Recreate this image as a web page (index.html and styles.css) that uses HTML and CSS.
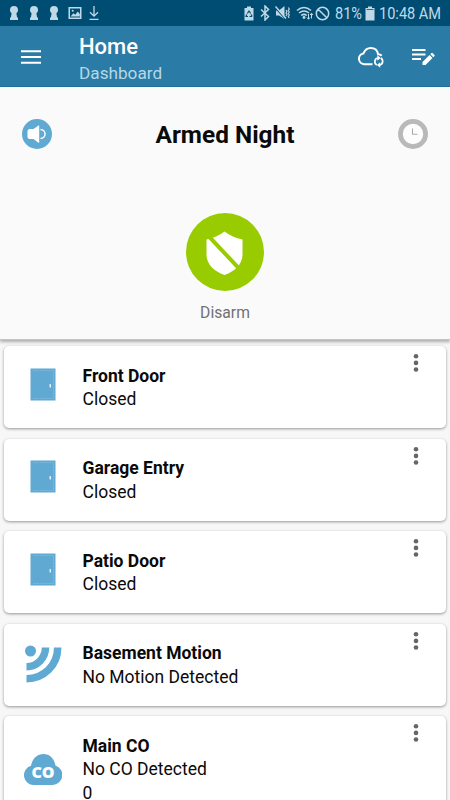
FILE: index.html
```html
<!DOCTYPE html>
<html lang="en">
<head>
  <meta charset="UTF-8" />
  <meta name="viewport" content="width=device-width, initial-scale=1.0"/>
  <title>Home Dashboard</title>
  <link rel="stylesheet" href="styles.css">
</head>
<body>
  <!-- shared icons -->
  <svg class="defs">
    <symbol id="keyhole" viewBox="0 0 10 16"><path d="M5 1a4 4 0 0 1 4 4c0 1.500-.7 2.500-1.600 3.200L8 12l1 1v2H1v-2l1-1 .6-3.800C1.700 7.500 1 6.500 1 5a4 4 0 0 1 4-4z"/></symbol>
    <symbol id="door" viewBox="0 0 26 33">
      <path d="M.5.5h25v32H.5z" fill="#5fa9d3"/>
      <path d="M3.500 2.500h20v28h-20" fill="none" stroke="#8fc6e3" stroke-width=".6" stroke-dasharray="2 1"/>
      <rect x="19.600" y="16" width="1.300" height="3.500" rx=".6" fill="#fff"/>
    </symbol>
    <symbol id="dots" viewBox="0 0 6 20"><circle cx="3" cy="3.200" r="2.300"/><circle cx="3" cy="9.900" r="2.300"/><circle cx="3" cy="16.500" r="2.300"/></symbol>
  </svg>

  <div class="status-bar">
    <div class="notifications">
      <svg width="10" height="16"><use href="#keyhole"/></svg>
      <svg width="10" height="16"><use href="#keyhole"/></svg>
      <svg width="10" height="16"><use href="#keyhole"/></svg>
      <svg class="photo" width="14" height="14" viewBox="0 0 14 14"><path fill-rule="evenodd" d="M.5 1h13v12H.5zM2 2.500v9h10v-9z"/><path d="M2.500 10.500l3-3.300 1.800 1.500 2.500-3.200 2 2.500v2.500z"/><circle cx="4.700" cy="4.800" r="1"/></svg>
      <svg class="download" width="12" height="16" viewBox="0 0 12 16"><path d="M6 1v10M2 7.200l4 4 4-4M1.500 14.300h9" fill="none" stroke="#c0d9e6" stroke-width="1.300"/></svg>
    </div>
    <div class="system">
      <svg class="saver" width="10" height="15" viewBox="0 0 10 15"><path d="M3 .5h4V2h2.500v12.500h-9V2H3z"/><path d="M3.300 7.500L5 5l1.700 2.500M2.700 8.500l-.7 2h2M8 10.500H5.500M7.200 8.500l.8 2" fill="none" stroke="#004d73" stroke-width="1.200"/></svg>
      <svg class="bluetooth" width="10" height="16" viewBox="0 0 10 16"><path d="M1 4.500l7.500 7L5 15V1l3.500 3.500L1 11.500" fill="none" stroke="#c0d9e6" stroke-width="1.500"/></svg>
      <svg class="mute" width="15" height="14" viewBox="0 0 15 14"><path d="M1 4.500h3L9.500 0v13L4 9.500H1z"/><path d="M0 1.500L10.500 13" stroke="#004d73" stroke-width="1.500"/><path d="M.5.500l10.500 12" stroke="#c0d9e6" stroke-width="1.500"/><path d="M11 4l1 1.500L11 7l1 1.500-1 1.500M13.300 1.500l1 1.500-1 1.500 1 1.500-1 1.500 1 1.500-1 1.500 1 1.500" fill="none" stroke="#c0d9e6" stroke-width="1.200"/></svg>
      <svg class="wifi" width="18" height="15" viewBox="0 0 18 15"><path d="M1 4.500Q8 -1.500 15 4.500M3 7Q8 3 13 7M5.200 9.500Q8 7.200 10.800 9.500" fill="none" stroke="#c0d9e6" stroke-width="1.600"/><circle cx="8" cy="11.500" r="1.400"/><path d="M12.500 8v5M11 11.500l1.500 1.800 1.500-1.800M15.500 12.500v-5M14 9l1.500-1.800L17 9" fill="none" stroke="#c0d9e6"/></svg>
      <svg class="blocked" width="15" height="15" viewBox="0 0 15 15"><path d="M3.200 3.200l8.600 8.600M13.700 7.500a6.200 6.200 0 1 1-12.400 0 6.200 6.200 0 0 1 12.400 0z" fill="none" stroke="#c0d9e6" stroke-width="1.500"/></svg>
      <span class="percent">81%</span>
      <svg class="battery" width="10" height="15" viewBox="0 0 10 15"><path d="M3 .5h4V2h2.500v12.500h-9V2H3z"/><path d="M1.500 3.500h7" stroke="#2b6b8c"/></svg>
      <span class="time">10:48 AM</span>
    </div>
  </div>

  <header class="app-bar">
    <svg class="menu" width="20" height="14" viewBox="0 0 20 14"><path d="M0 1.200h20M0 7h20M0 12.800h20" stroke="#fff" stroke-width="2"/></svg>
    <div class="titles">
      <h1>Home</h1>
      <p>Dashboard</p>
    </div>
    <svg class="cloud" width="28" height="22" viewBox="0 0 28 22">
      <path d="M15.500 18.200H7a5.400 5.400 0 0 1-.6-10.700C8 3.500 10.500 2 13.700 2c4 0 6.800 2.500 7.400 6.300 1.300.1 2.700.6 3.600 1.500" fill="none" stroke="#fff" stroke-width="2"/>
      <path d="M19.800 19a3.800 3.800 0 0 1 .9-7M23.700 12a3.800 3.800 0 0 1-.9 7" fill="none" stroke="#fff" stroke-width="1.700"/>
      <path d="M20.300 9.300l3.300 2.700-3.300 2.700zM23.200 16.300l-3.300 2.700 3.300 2.700z" fill="#fff"/>
    </svg>
    <svg class="edit" width="24" height="18" viewBox="0 0 24 18"><path d="M1 2h13.500M1 6.500h13.500M1 11h9" stroke="#fff" stroke-width="2"/><path d="M11.500 14l7-7 3 3-7 7h-3zM19.300 6.200l1.200-1.200q.5-.4 1 0l2 2q.5.500 0 1l-1.200 1.200z" fill="#fff"/></svg>
  </header>

  <section class="panel">
    <div class="panel-head">
      <svg width="30" height="30" viewBox="0 0 30 30"><circle cx="15" cy="15" r="15" fill="#5fa9d3"/><path d="M7 10h4.500l5-3.500h.7v17.300h-.7l-5-3.800H7l-1.500-1.500v-7z" fill="#fff"/><path d="M18.500 10.500c6 0 6 9 0 9" fill="none" stroke="#fff" stroke-width="1.500"/></svg>
      <h2>Armed Night</h2>
      <svg width="30" height="30" viewBox="0 0 30 30"><circle cx="15" cy="15" r="12.600" fill="#fdfdfd" stroke="#b9b9b9" stroke-width="4.800"/><path d="M14.500 9.500v5.800h5" fill="none" stroke="#aaa" stroke-width="1.100"/></svg>
    </div>
    <div class="disarm">
      <svg width="78" height="78" viewBox="0 0 78 78">
        <circle cx="39" cy="39" r="39" fill="#99cc00"/>
        <path d="M38.500 18.500c5.500 4.200 11 6.800 18 8v15c0 10-7.500 16.500-18 20.500-10.500-4-18-10.500-18-20.500v-15c7-1.200 12.500-3.800 18-8z" fill="#fff"/>
        <path d="M20 20.400l36 38.200" stroke="#99cc00" stroke-width="4"/>
      </svg>
      <span>Disarm</span>
    </div>
  </section>

  <main class="devices">
    <div class="card">
      <div class="icon"><svg width="26" height="33"><use href="#door"/></svg></div>
      <div class="info"><h3>Front Door</h3><p>Closed</p></div>
      <svg class="more" width="6" height="20"><use href="#dots"/></svg>
    </div>
    <div class="card">
      <div class="icon"><svg width="26" height="33"><use href="#door"/></svg></div>
      <div class="info"><h3>Garage Entry</h3><p>Closed</p></div>
      <svg class="more" width="6" height="20"><use href="#dots"/></svg>
    </div>
    <div class="card">
      <div class="icon"><svg width="26" height="33"><use href="#door"/></svg></div>
      <div class="info"><h3>Patio Door</h3><p>Closed</p></div>
      <svg class="more" width="6" height="20"><use href="#dots"/></svg>
    </div>
    <div class="card">
      <div class="icon icon-motion">
        <svg width="38" height="38" viewBox="0 0 38 38"><circle cx="6.500" cy="6" r="5.500" fill="#5fa9d3"/><path d="M21.500 2.500c0 10.500-8.500 19.200-19 19.200M33.700 2.500c0 17.500-13.700 31.200-31.200 31.200" fill="none" stroke="#5fa9d3" stroke-width="7.500"/></svg>
      </div>
      <div class="info"><h3>Basement Motion</h3><p>No Motion Detected</p></div>
      <svg class="more" width="6" height="20"><use href="#dots"/></svg>
    </div>
    <div class="card card-co">
      <div class="icon">
        <svg width="38" height="31" viewBox="0 0 38 31"><path d="M10 31a9.800 9.800 0 0 1-3-19.200C8.500 4.500 13 0 19.500 0S30 4.500 31.500 11.500A10 10 0 0 1 28.500 31z" fill="#5fa9d3"/><text class="co" x="19" y="24">CO</text></svg>
      </div>
      <div class="info"><h3>Main CO</h3><p>No CO Detected</p><p>0</p></div>
      <svg class="more" width="6" height="20"><use href="#dots"/></svg>
    </div>
  </main>
</body>
</html>
```
FILE: styles.css
```css
* { box-sizing: border-box; }
body { margin: 0; height: 800px; overflow: hidden; background: #f7f7f7; font-family: Roboto, sans-serif; color: #0a0a0a; }
h1, h2, h3, p { margin: 0; }
svg { display: block; flex: none; }
.defs { display: none; }

.status-bar {
  display: flex; justify-content: space-between; height: 26px;
  padding: 0 9px; background: #004d73; color: #c0d9e6; fill: #c0d9e6;
}
.notifications, .system { display: flex; align-items: center; }
.notifications { gap: 10px; }
.photo { margin-left: -1px; }
.download { margin-left: -4px; }
.saver { margin-right: -1px; }
.bluetooth { margin-left: 7px; }
.mute { margin-left: 5px; }
.wifi { margin-left: 6px; }
.blocked { margin-left: 1px; }
.battery { margin-left: 3px; }
.percent, .time { font-size: 16px; line-height: 29px; white-space: nowrap; transform: scaleX(.91); transform-origin: left; }
.percent { width: 27px; margin-left: 5px; }
.time { width: 62px; margin-left: 4px; }

.app-bar {
  display: flex; height: 61px; padding: 0 15px 0 21px;
  background: #2a7ba5; border-bottom: 1px solid #22709a; color: #fff;
}
.menu { margin-top: 24px; }
.titles { flex: 1; padding: 7px 0 0 38px; }
.titles h1 { font-size: 22px; font-weight: 500; line-height: 27px; }
.titles p { font-size: 17.200px; line-height: 26px; color: #b5d8e9; }
.cloud { margin-top: 20px; }
.edit { margin: 22px 0 0 26px; }

.panel {
  position: relative; height: 253px; padding: 32px 22px 0;
  background: #fafafa; border-bottom: 1px solid #c4c4c4; box-shadow: 0 2px 3px rgba(0, 0, 0, .3);
}
.panel-head { display: flex; justify-content: space-between; align-items: center; height: 30px; }
.panel-head h2 { font-size: 24.400px; font-weight: 700; line-height: 30px; padding-top: 2px; }
.disarm { display: flex; flex-direction: column; align-items: center; margin-top: 64px; }
.disarm span { margin-top: 11px; font-size: 15.700px; line-height: 22px; color: #717171; }

.devices { display: flex; flex-direction: column; gap: 10.500px; padding: 6px 4px 0; }
.card {
  display: flex; flex: none; height: 82px; padding-right: 27px;
  background: #fff; border-radius: 5px; box-shadow: 0 1px 3px rgba(0, 0, 0, .4);
}
.icon { display: flex; justify-content: center; align-items: center; width: 78.500px; height: 76px; }
.icon-motion { height: 80px; }
.info { flex: 1; padding-top: 18.700px; }
.info h3, .info p { font-size: 17.500px; line-height: 23.600px; }
.info h3 { font-weight: 700; }
.more { margin-top: 7px; fill: #666; }
.card-co { height: 106px; }
.card-co .icon { height: 106px; }
.co { font: 800 16px "Open Sans", sans-serif; fill: #fff; text-anchor: middle; }
```
